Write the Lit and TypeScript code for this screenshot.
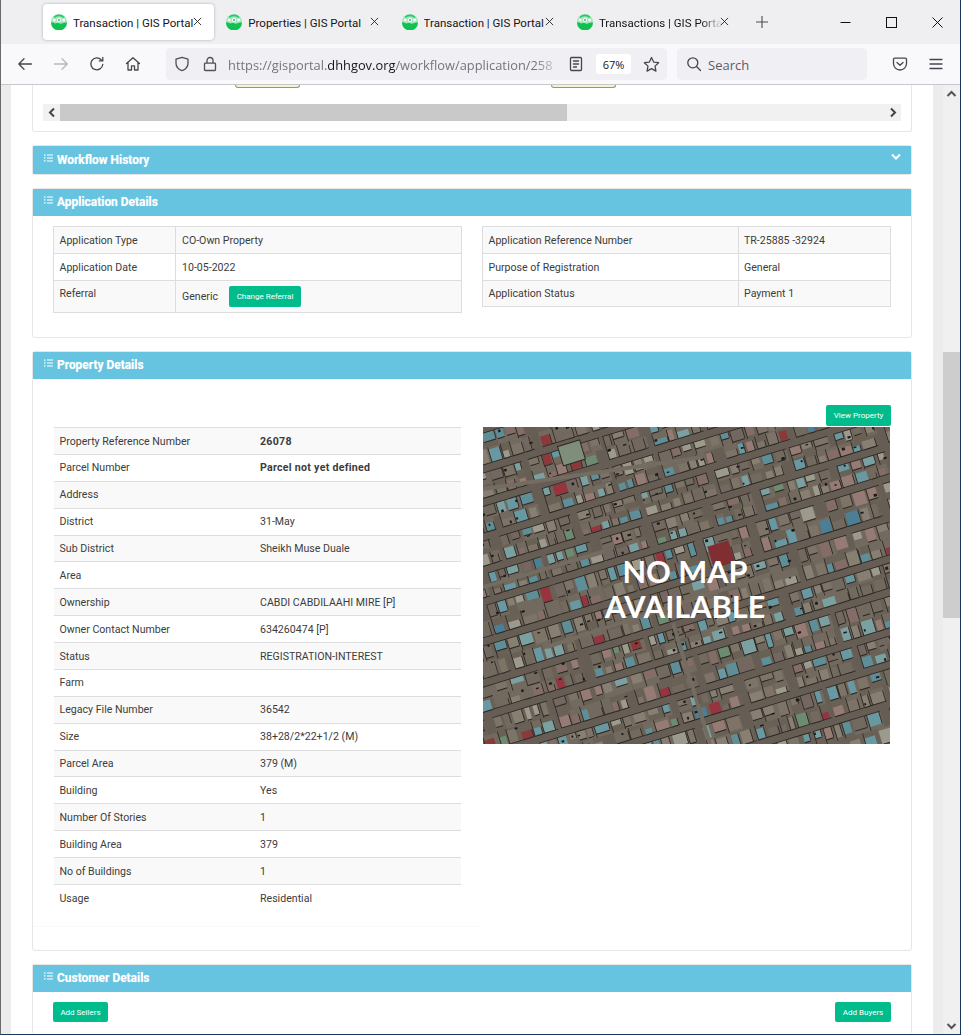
import { LitElement, html, css, svg } from "lit";
import { customElement } from "lit/decorators.js";

const favicon = html`<svg class="fav" viewBox="0 0 16 16"><circle cx="8" cy="8" r="8" fill="#a8e6bf"/><path d="M0 8.5c2-.6 3 .9 4.5.9S6.500 8.500 8 9.300s3 .4 4-.2 2.500-.9 4-.6A8 8 0 0 1 0 8.500Z" fill="#0fc14f"/><circle cx="8" cy="6" r="2" fill="#fff"/><circle cx="8" cy="6" r=".9" fill="#17b755"/><circle cx="3.300" cy="6" r="1.300" fill="#fff"/><circle cx="12.700" cy="6" r="1.300" fill="#fff"/><path d="M3 3.500A7 7 0 0 1 13 3.500" fill="none" stroke="#2cc768" stroke-width="1.600"/></svg>`;
const close = html`<svg class="x" viewBox="0 0 10 10"><path d="M1 1l8 8M9 1l-8 8" stroke="#222" stroke-width="1" fill="none"/></svg>`;
const listIcon = html`<svg class="li" viewBox="0 0 9 8"><path d="M0 .4h1.500v1.300H0zM0 3.300h1.500v1.300H0zM0 6.200h1.500v1.300H0z" fill="#fff"/><path d="M3 .6h6v1H3zM3 3.500h6v1H3zM3 6.400h6v1H3z" fill="#fff"/></svg>`;
const ic = (d: string, color = "#3a3a44", w = 1.3) => html`<svg class="i16" viewBox="0 0 16 16"><path d=${d} fill="none" stroke=${color} stroke-width=${w} stroke-linecap="round" stroke-linejoin="round"/></svg>`;

const appLeft: [string, unknown][] = [["Application Type", "CO-Own Property"], ["Application Date", "10-05-2022"]];
const appRight = [["Application Reference Number", "TR-25885 -32924"], ["Purpose of Registration", "General"], ["Application Status", "Payment 1"]];
const props: [string, string, boolean?][] = [
  ["Property Reference Number", "26078", true], ["Parcel Number", "Parcel not yet defined", true], ["Address", ""], ["District", "31-May"],
  ["Sub District", "Sheikh Muse Duale"], ["Area", ""], ["Ownership", "CABDI CABDILAAHI MIRE [P]"], ["Owner Contact Number", "634260474 [P]"],
  ["Status", "REGISTRATION-INTEREST"], ["Farm", ""], ["Legacy File Number", "36542"], ["Size", "38+28/2*22+1/2 (M)"], ["Parcel Area", "379 (M)"],
  ["Building", "Yes"], ["Number Of Stories", "1"], ["Building Area", "379"], ["No of Buildings", "1"], ["Usage", "Residential"],
];

function buildMap() {
  let s = 4711;
  const r = () => ((s = (s * 16807) % 2147483647) - 1) / 2147483646;
  const paths: Record<string, string> = {};
  const order = ["#71675d", "#7b7167", "#877c70", "#938a7d", "#7d6e68", "#8f7570", "#a3857f", "#659aa6", "#70a5b0", "#85aeb0", "#aaa79a", "#973c3e", "#a53545", "#74977a", "#4f8aa3", "#2b2724", "#1c1a18"];
  order.forEach((c) => (paths[c] = ""));
  const add = (c: string, x: number, y: number, w: number, h: number) => {
    paths[c] += `M${x.toFixed(1)} ${y.toFixed(1)}h${w.toFixed(1)}v${h.toFixed(1)}h${(-w).toFixed(1)}z`;
  };
  const pick = () => {
    const v = r();
    if (v < 0.42) return order[1 + Math.floor(r() * 3)];
    if (v < 0.62) return order[4 + Math.floor(r() * 3)];
    if (v < 0.86) return order[7 + Math.floor(r() * 3)];
    if (v < 0.93) return order[10];
    if (v < 0.97) return order[11 + Math.floor(r() * 2)];
    return order[13 + Math.floor(r() * 2)];
  };
  for (let y = -190; y < 530; ) {
    const bh = 25 + r() * 12;
    for (let x = -170; x < 610; ) {
      const bw = 40 + r() * 40;
      const ph = (bh - 2) / 2;
      for (let j = 0; j < 2; j++) {
        for (let px = x; px < x + bw - 7; ) {
          const pw = 8 + r() * 8;
          const py = y + j * ph;
          add(order[r() > 0.5 ? 0 : 1], px, py, pw, ph);
          const c = pick();
          const bw2 = (pw - 1.6) * (0.7 + r() * 0.3);
          const bh2 = (ph - 1.6) * (0.45 + r() * 0.55);
          const bx = px + 0.8;
          const by = py + (j === 0 ? 0.8 : ph - bh2 - 0.8);
          add(c, bx, by, bw2, bh2);
          if (r() > 0.3) add(order[15], bx, by + bh2, bw2, 1);
          if (r() > 0.45) add(order[15], bx + bw2, by, 0.8, bh2);
          add(order[15], px, j === 0 ? py : py + ph - 0.8, pw, 0.8);
          if (r() > 0.4) add(order[15], px, py, 0.8, ph);
          if (r() > 0.75) add(order[16], px + r() * pw * 0.7, py + r() * ph * 0.7, 1.6 + r() * 2, 1.2 + r() * 1.6);
          px += pw;
        }
      }
      x += bw + 4.5;
    }
    y += bh + 5;
  }
  return order.map((c) => svg`<path d=${paths[c]} fill=${c}></path>`);
}
const mapPaths = buildMap();

@customElement("app-root")
export class AppRoot extends LitElement {
  static styles = css`
    :host { display: block; width: 961px; height: 1035px; overflow: hidden; font-family: Roboto, "Liberation Sans", sans-serif; }
    * { box-sizing: border-box; }
    .window { width: 961px; height: 1035px; display: flex; flex-direction: column; border-left: 1px solid #6b6b6b; border-right: 1px solid #17375e; border-bottom: 1px solid #17375e; background: #fff; overflow: hidden; }
    .tabbar { height: 44px; flex: none; background: #efeff1; display: flex; align-items: flex-start; padding: 4px 0 0 42px; gap: 4.3px; font-family: Roboto, "Noto Sans", sans-serif; }
    .tab { width: 171px; height: 36px; flex: none; display: flex; align-items: center; padding-left: 8px; position: relative; border-radius: 4px; font-size: 11.5px; color: #15141a; }
    .tab.active { background: #fff; box-shadow: 0 0 3px rgba(0,0,0,.28); }
    .fav { width: 16px; height: 16px; flex: none; margin-right: 6px; }
    .title { width: 122px; white-space: nowrap; overflow: hidden; flex: none; padding-top: 1px; }
    .title.fade { width: 124px; -webkit-mask-image: linear-gradient(to right, #000 82%, transparent 100%); mask-image: linear-gradient(to right, #000 82%, transparent 100%); }
    .x { width: 9px; height: 9px; position: absolute; left: 150px; top: 13px; }
    .tab:nth-child(2) .x { left: 152px; }
    .tab:nth-child(3) .x, .tab:nth-child(4) .x { left: 151px; }
    .plus { width: 28px; height: 36px; flex: none; display: flex; align-items: center; justify-content: center; margin-left: 4px; }
    .plus svg { width: 14px; height: 14px; }
    .winctl { margin-left: auto; margin-top: -4px; display: flex; }
    .winctl div { width: 46px; height: 44px; display: flex; align-items: center; justify-content: center; }
    .winctl svg { width: 11px; height: 11px; }
    .toolbar { height: 41px; flex: none; background: #f9f9fb; border-bottom: 1px solid #c8c8cc; display: flex; align-items: center; padding: 0 0 0 6px; font-family: "Open Sans", "Noto Sans", sans-serif; }
    .tbtn { width: 36px; height: 32px; flex: none; display: flex; align-items: center; justify-content: center; }
    .i16 { width: 16px; height: 16px; flex: none; display: block; }
    .urlbar { width: 501px; height: 32px; margin-left: 15px; flex: none; background: #f0f0f4; border-radius: 4px; display: flex; align-items: center; padding-left: 8px; }
    .lock { margin-left: 12px; }
    .url { margin-left: 10px; width: 334px; flex: none; white-space: nowrap; overflow: hidden; font-size: 12.85px; padding-top: 1px; color: #74747e; -webkit-mask-image: linear-gradient(to right, #000 92%, transparent 100%); mask-image: linear-gradient(to right, #000 92%, transparent 100%); }
    .url b { font-weight: 400; color: #15141a; }
    .reader { margin-left: 6px; }
    .pill { width: 35px; height: 20px; margin-left: 12px; background: #fff; border-radius: 3px; font-size: 11px; color: #15141a; display: flex; align-items: center; justify-content: center; flex: none; }
    .star { margin-left: 12px; width: 17px; height: 17px; }
    .search { width: 190px; height: 32px; margin-left: 10px; flex: none; background: #f0f0f4; border-radius: 4px; display: flex; align-items: center; padding-left: 9px; gap: 6px; font-size: 13px; color: #5b5b66; }
    .search span { padding-top: 1px; }
    .pocket { margin-left: 15px; }
    .viewport { flex: 1; min-height: 0; display: flex; }
    .gutter { width: 10px; flex: none; background: #ececec; }
    .page { flex: 1; min-width: 0; overflow: hidden; background: #fff; padding: 0 21px; font-size: 10.6px; color: #3c3c3c; display: flex; flex-direction: column; }
    .bar { width: 17px; flex: none; background: #f0f0f0; display: flex; flex-direction: column; align-items: center; }
    .bar .up { height: 17px; width: 100%; display: flex; align-items: center; justify-content: center; }
    .bar svg { width: 11px; height: 8px; }
    .thumb { width: 100%; height: 266px; background: #cdcdcd; margin-top: 250px; }
    .bar .down { margin-top: auto; height: 17px; width: 100%; display: flex; align-items: center; justify-content: center; }
    .card { flex: none; border: 1px solid #e6e6e6; border-radius: 3px; background: #fff; margin-bottom: 13px; }
    .card.first { border-top: 0; border-radius: 0 0 3px 3px; height: 47px; padding: 0 10px; }
    .peek { display: flex; height: 3px; }
    .peek i { display: block; height: 3px; width: 65px; background: #f5f3cf; border: 1px solid #8f9a72; border-top: 0; border-radius: 0 0 4px 4px; }
    .peek i:first-child { margin-left: 192px; }
    .peek i:last-child { margin-left: 251px; }
    .hscroll { margin-top: 16px; height: 17px; display: flex; background: #f1f1f1; }
    .hscroll .arrow { width: 17px; flex: none; display: flex; align-items: center; justify-content: center; }
    .hscroll .arrow svg { width: 8px; height: 11px; }
    .hscroll .hthumb { width: 507px; background: #c9c9c9; flex: none; }
    .hscroll .arrow:last-child { margin-left: auto; }
    .head { height: 27px; background: #67c4e0; color: #fff; font-weight: 700; font-size: 11.95px; display: flex; align-items: center; padding: 0 0 2px 11px; position: relative; text-shadow: 0 0 1px rgba(255,255,255,.45); }
    .head.wf { height: 28px; padding-bottom: 1px; }
    .li { width: 9px; height: 8px; margin: -3px 4px 0 0; flex: none; }
    .chev { position: absolute; right: 10px; top: 7px; width: 10px; height: 8px; }
    .grid2 { display: grid; grid-template-columns: 409px 409px; column-gap: 20px; align-items: start; }
    .appbody { padding: 10px 20px 24px; }
    table { border-collapse: collapse; width: 100%; table-layout: fixed; }
    .bt td { border: 1px solid #ddd; height: 26.8px; padding: 1px 5.5px 0; vertical-align: middle; }
    .bt td + td { padding-left: 6px; }
    .bt.r td + td { padding-left: 5px; }
    .bt.r tr:last-child td { padding-top: 0; }
    .bt tr:nth-child(odd) td { background: #f9f9f9; }
    .bt td.lab { width: 122px; }
    .bt.r td.lab { width: 256px; }
    .bt td.top { vertical-align: top; padding-top: 6px; }
    .bt tr.ref td { height: 32.500px; }
    .gen { display: flex; align-items: center; gap: 11px; }
    .btn { display: inline-flex; align-items: center; justify-content: center; height: 21px; background: #00bc8c; color: #fff; border-radius: 2px; font-size: 8px; flex: none; }
    .btn.small { height: 20px; }
    .propbody { padding: 26px 20px 0; }
    .viewrow { display: flex; justify-content: flex-end; margin-bottom: 1px; }
    .propgrid { display: grid; grid-template-columns: 409px 409px; column-gap: 20px; padding-bottom: 23px; }
    .pwrap { padding-bottom: 15px; border-bottom: 1px solid #fafafa; margin: 0 -20px 0 -20px; padding-left: 21px; padding-right: 0; }
    .pwrap table { width: 407px; }
    .pt td { height: 26.88px; padding: 0 5.5px; border-top: 1px solid #ddd; }
    .pt td + td { padding-left: 6px; }
    .pt tr:nth-child(odd) td { background: #f9f9f9; }
    .pt td.lab { width: 200px; }
    .pt td.strong { font-weight: 700; letter-spacing: .28px; }
    .map { width: 407px; height: 317px; margin-left: 1px; display: grid; overflow: hidden; }
    .map > * { grid-area: 1 / 1; }
    .map svg { width: 407px; height: 317px; display: block; filter: blur(.4px); }
    .nomap { position: relative; display: flex; align-items: center; justify-content: center; text-align: center; color: #fff; font-family: Lato, sans-serif; font-weight: 700; font-size: 30.7px; line-height: 35px; padding: 7px 3px 0 0; }
    .custbody { padding: 10px 20px 0; display: flex; justify-content: space-between; }
    .card.last { margin-bottom: 0; flex: 1; border-bottom: 0; }
  `;

  private tab(title: string, active = false, fade = false) {
    return html`<div class="tab ${active ? "active" : ""}">${favicon}<span class="title ${fade ? "fade" : ""}">${title}</span>${close}</div>`;
  }

  render() {
    return html`<div class="window">
      <div class="tabbar">
        ${this.tab("Transaction | GIS Portal", true)}
        ${this.tab("Properties | GIS Portal")}
        ${this.tab("Transaction | GIS Portal")}
        ${this.tab("Transactions | GIS Portal", false, true)}
        <div class="plus"><svg viewBox="0 0 14 14"><path d="M7 1v12M1 7h12" stroke="#4a4a52" stroke-width="1.100"/></svg></div>
        <div class="winctl">
          <div><svg viewBox="0 0 11 11"><path d="M.5 5.500h10" stroke="#111" stroke-width="1"/></svg></div>
          <div><svg viewBox="0 0 11 11"><rect x=".5" y=".5" width="10" height="10" fill="none" stroke="#111"/></svg></div>
          <div><svg viewBox="0 0 11 11"><path d="M.5.500l10 10M10.500.500l-10 10" stroke="#111" stroke-width="1"/></svg></div>
        </div>
      </div>
      <div class="toolbar">
        <div class="tbtn">${ic("M14.500 8H1.800M7 2.800 1.800 8 7 13.200", "#45454e")}</div>
        <div class="tbtn">${ic("M1.500 8h12.700M9 2.800 14.200 8 9 13.200", "#b6b6bc")}</div>
        <div class="tbtn">${ic("M13.800 8.500A6 6 0 1 1 12.200 3.700M13.800 1.500v3.400h-3.400", "#45454e")}</div>
        <div class="tbtn">${ic("M1.500 7.500 8 1.800l6.500 5.700M3 6.500v7.500h3.500v-4.200h3V14H13V6.500", "#45454e")}</div>
        <div class="urlbar">
          ${ic("M8 1.300 2 3.200v4c0 3.600 2.600 6.200 6 7.500 3.400-1.300 6-3.900 6-7.500v-4Z", "#4f4f58")}
          <span class="lock">${ic("M3.300 7.200h9.400a.8.8 0 0 1 .8.8v5.700a.8.8 0 0 1-.8.8H3.300a.8.8 0 0 1-.8-.8V8a.8.8 0 0 1 .8-.8ZM5 7V4.500a3 3 0 0 1 6 0V7", "#4f4f58")}</span>
          <span class="url">https://gisportal.<b>dhhgov.org</b>/workflow/application/258</span>
          <span class="reader">${ic("M3.500 1.500h9a1 1 0 0 1 1 1v11a1 1 0 0 1-1 1h-9a1 1 0 0 1-1-1v-11a1 1 0 0 1 1-1ZM5.500 5h5M5.500 8h5M5.500 11h3", "#45454e")}</span>
          <span class="pill">67%</span>
          <svg class="star" viewBox="0 0 16 16"><path d="M8 1.400 10 5.700l4.700.6-3.400 3.200.9 4.700L8 11.900l-4.200 2.300.9-4.700L1.300 6.300 6 5.700Z" fill="none" stroke="#45454e" stroke-width="1.200" stroke-linejoin="round"/></svg>
        </div>
        <div class="search">${ic("M6.800 1.800a5 5 0 1 1 0 10 5 5 0 0 1 0-10ZM10.500 10.500l4 4", "#45454e")}<span>Search</span></div>
        <div class="tbtn pocket">${ic("M2.800 2.200h10.400a1.300 1.300 0 0 1 1.300 1.300v4a6.500 6.500 0 0 1-13 0v-4a1.300 1.300 0 0 1 1.300-1.300ZM5 6.500 8 9.300l3-2.800", "#45454e")}</div>
        <div class="tbtn">${ic("M2 3.500h12M2 8h12M2 12.500h12", "#45454e")}</div>
      </div>
      <div class="viewport">
        <div class="gutter"></div>
        <div class="page">
          <div class="card first">
            <div class="peek"><i></i><i></i></div>
            <div class="hscroll">
              <div class="arrow"><svg viewBox="0 0 8 11"><path d="M6 1.500 2 5.500l4 4" fill="none" stroke="#444" stroke-width="2"/></svg></div>
              <div class="hthumb"></div>
              <div class="arrow"><svg viewBox="0 0 8 11"><path d="M2 1.500l4 4-4 4" fill="none" stroke="#444" stroke-width="2"/></svg></div>
            </div>
          </div>
          <div class="card">
            <div class="head wf">${listIcon}Workflow History<svg class="chev" viewBox="0 0 10 8"><path d="M1 1.500 5 5.500l4-4" fill="none" stroke="#fff" stroke-width="2"/></svg></div>
          </div>
          <div class="card">
            <div class="head">${listIcon}Application Details</div>
            <div class="appbody grid2">
              <table class="bt">
                ${appLeft.map(([a, b]) => html`<tr><td class="lab">${a}</td><td>${b}</td></tr>`)}
                <tr class="ref"><td class="lab top">Referral</td><td><div class="gen">Generic <span class="btn" style="width:72px">Change Referral</span></div></td></tr>
              </table>
              <table class="bt r">
                ${appRight.map(([a, b]) => html`<tr><td class="lab">${a}</td><td>${b}</td></tr>`)}
              </table>
            </div>
          </div>
          <div class="card">
            <div class="head">${listIcon}Property Details</div>
            <div class="propbody">
              <div class="viewrow"><span class="btn" style="width:65px">View Property</span></div>
              <div class="propgrid">
                <div class="pwrap">
                  <table class="pt">
                    ${props.map(([a, b, s]) => html`<tr><td class="lab">${a}</td><td class=${s ? "strong" : ""}>${b}</td></tr>`)}
                  </table>
                </div>
                <div class="map">
                  <svg viewBox="0 0 407 317" preserveAspectRatio="none">
                    <rect width="407" height="317" fill="#6e655b"></rect>
                    <g transform="rotate(-17 203 158)">${mapPaths}</g>
                    <path d="M0 62 220 30M64 220 287 147M190 196 227 317M0 160 120 125" fill="none" stroke="#7d7469" stroke-width="4"></path>
                    <rect x="227" y="116" width="22" height="22" fill="#8c2f35" transform="rotate(-17 238 127)"></rect>
                    <rect x="77" y="16" width="23" height="20" fill="#8a9a86" stroke="#2b2724" transform="rotate(-17 88 26)"></rect>
                    <rect width="407" height="317" fill="#2a2622" opacity=".1"></rect>
                  </svg>
                  <div class="nomap">NO MAP<br />AVAILABLE</div>
                </div>
              </div>
            </div>
          </div>
          <div class="card last">
            <div class="head">${listIcon}Customer Details</div>
            <div class="custbody">
              <span class="btn small" style="width:55px">Add Sellers</span>
              <span class="btn small" style="width:56px">Add Buyers</span>
            </div>
          </div>
        </div>
        <div class="gutter"></div>
        <div class="bar">
          <div class="up"><svg viewBox="0 0 11 8"><path d="M1.500 6 5.500 2l4 4" fill="none" stroke="#555" stroke-width="2"/></svg></div>
          <div class="thumb"></div>
          <div class="down"><svg viewBox="0 0 11 8"><path d="M1.500 2 5.500 6l4-4" fill="none" stroke="#555" stroke-width="2"/></svg></div>
        </div>
      </div>
    </div>`;
  }
}
